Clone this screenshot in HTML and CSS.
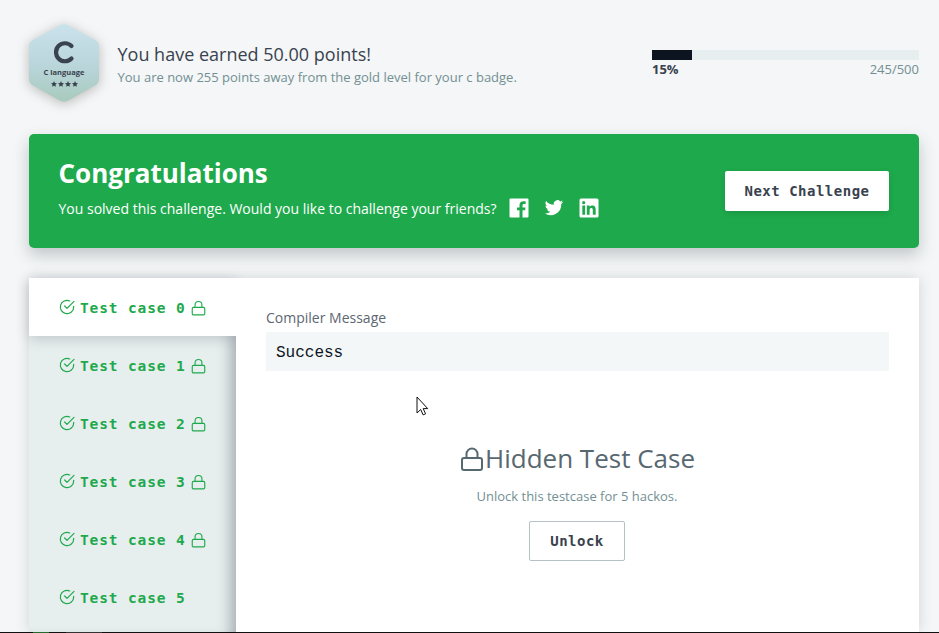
FILE: index.html
```html
<!DOCTYPE html>
<html lang="en">
<head>
<meta charset="utf-8">
<title>Challenge result</title>
<link rel="stylesheet" href="styles.css">
</head>
<body>
<svg class="defs" width="0" height="0" aria-hidden="true">
  <symbol id="check" viewBox="0 0 24 24"><path d="M22 11v1a10 10 0 1 1-5.9-9.1M22.5 3.5 12 14l-3.5-3.5"/></symbol>
  <symbol id="lock" viewBox="0 0 24 24"><rect x="2" y="11" width="20" height="12" rx="2"/><path d="M6.5 11V7a5.5 5.5 0 0 1 11 0v4"/></symbol>
  <symbol id="star" viewBox="0 0 10 10"><path d="m5 0 1.5 3.3 3.5.4-2.6 2.4.7 3.6L5 8 1.9 9.7l.7-3.6L0 3.7l3.5-.4z"/></symbol>
</svg>
<main class="page">
  <header class="score">
    <div class="badge">
      <svg class="badge-shape" viewBox="0 0 72 78"><defs><linearGradient id="badge-fill" x1="0" y1="0" x2="0" y2="1"><stop offset="0" stop-color="#cae2ec"/><stop offset=".55" stop-color="#b9d5da"/><stop offset="1" stop-color="#a8cabc"/></linearGradient></defs><path fill="url(#badge-fill)" d="M32 1.2Q36-.8 40 1.2L67 16Q71 18.500 71 22.500V55Q71 59 67 61.500L40 76.800Q36 78.800 32 76.800L5 61.500Q1 59 1 55V22.500Q1 18.500 5 16Z"/><path d="M43.500 22A9 9 0 1 0 43.500 34.500" fill="none" stroke="#39424e" stroke-width="4.200" stroke-linecap="round"/></svg>
      <span class="badge-name">C language</span>
      <span class="stars"><svg><use href="#star"/></svg><svg><use href="#star"/></svg><svg><use href="#star"/></svg><svg><use href="#star"/></svg></span>
    </div>
    <div class="earned"><h1>You have earned 50.00 points!</h1><p>You are now 255 points away from the gold level for your c badge.</p></div>
    <div class="progress"><div class="track"><div class="fill"></div></div><div class="progress-labels"><strong>15%</strong><span>245/500</span></div></div>
  </header>
  <section class="banner">
    <div><h2>Congratulations</h2>
      <div class="share"><span class="share-text">You solved this challenge. Would you like to challenge your friends?</span>
        <svg class="social" viewBox="0 0 20 20"><path fill-rule="evenodd" d="M1.500.500h17a1 1 0 0 1 1 1v17a1 1 0 0 1-1 1h-5V12.300h2.600l.4-2.900h-3V7.600c0-1 .3-1.600 1.500-1.600h1.600V3.300c-.6-.1-1.300-.1-2.200-.1-2.400 0-3.900 1.400-3.900 4v2.200H8v2.900h2.500v7.200h-9a1 1 0 0 1-1-1v-17a1 1 0 0 1 1-1z"/></svg>
        <svg class="social" viewBox="0 0 24 24"><path d="M23 4.800a9 9 0 0 1-2.600.7 4.500 4.500 0 0 0 2-2.500 9 9 0 0 1-2.900 1.100 4.500 4.500 0 0 0-7.700 4.100A12.800 12.800 0 0 1 2.500 3.500a4.500 4.500 0 0 0 1.400 6 4.500 4.500 0 0 1-2-.6 4.500 4.500 0 0 0 3.600 4.500 4.500 4.500 0 0 1-2 .1 4.500 4.500 0 0 0 4.200 3.100A9 9 0 0 1 1 18.500 12.800 12.800 0 0 0 20.700 7.100 9 9 0 0 0 23 4.800z"/></svg>
        <svg class="social" viewBox="0 0 20 20"><path fill-rule="evenodd" d="M2 .500h16A1.500 1.500 0 0 1 19.500 2v16a1.500 1.500 0 0 1-1.500 1.500H2A1.500 1.500 0 0 1 .500 18V2A1.500 1.500 0 0 1 2 .500zM3.300 7.600v9.100h2.800V7.600zM4.700 3.100a1.600 1.600 0 1 0 0 3.200 1.600 1.600 0 0 0 0-3.200zM7.800 7.600v9.100h2.800v-4.500c0-1.200.3-2.300 1.700-2.300s1.500 1.300 1.500 2.400v4.400h2.900v-5c0-2.400-.6-4.300-3.400-4.300-1.400 0-2.300.7-2.700 1.400V7.600z"/></svg>
      </div>
    </div>
    <button class="button next">Next Challenge</button>
  </section>
  <section class="results">
    <nav class="cases">
      <a class="case active"><svg class="check"><use href="#check"/></svg><span>Test case 0</span><svg class="lock"><use href="#lock"/></svg></a>
      <a class="case"><svg class="check"><use href="#check"/></svg><span>Test case 1</span><svg class="lock"><use href="#lock"/></svg></a>
      <a class="case"><svg class="check"><use href="#check"/></svg><span>Test case 2</span><svg class="lock"><use href="#lock"/></svg></a>
      <a class="case"><svg class="check"><use href="#check"/></svg><span>Test case 3</span><svg class="lock"><use href="#lock"/></svg></a>
      <a class="case"><svg class="check"><use href="#check"/></svg><span>Test case 4</span><svg class="lock"><use href="#lock"/></svg></a>
      <a class="case"><svg class="check"><use href="#check"/></svg><span>Test case 5</span></a>
    </nav>
    <div class="detail">
      <div class="label">Compiler Message</div>
      <pre class="message">Success</pre>
      <div class="hidden-case"><h3><svg class="lock big"><use href="#lock"/></svg>Hidden Test Case</h3><p>Unlock this testcase for 5 hackos.</p><button class="button unlock">Unlock</button></div>
    </div>
  </section>
  <footer class="edge"></footer>
</main>
<svg class="cursor" viewBox="0 0 13 20"><path d="M1 1v16l3.700-3.500 2.400 5.400 2.500-1.100-2.400-5.200h4.500z" fill="#fff" stroke="#111" stroke-linejoin="round"/></svg>
</body>
</html>
```
FILE: styles.css
```css
* { box-sizing: border-box; }
body { margin: 0; background: #f4f6f7; color: #39424e; font-family: "Open Sans", sans-serif; overflow: hidden; }
h1, h2, h3, p, pre { margin: 0; }
svg { display: block; flex: none; }
.defs, .cursor { position: absolute; }
.page { height: 633px; display: flex; flex-direction: column; overflow: hidden; }
.score { height: 134px; flex: none; display: flex; align-items: flex-start; padding: 24px 20px 0 28px; }
.badge { position: relative; width: 72px; height: 78px; display: flex; flex-direction: column; align-items: center; padding-top: 43px; }
.badge-shape { position: absolute; top: 0; left: 0; width: 72px; height: 78px; overflow: visible; filter: drop-shadow(0 2px 6px rgba(60, 50, 40, .3)); }
.badge-name { position: relative; font-size: 7.5px; line-height: 10px; font-weight: 700; white-space: nowrap; }
.stars { position: relative; display: flex; gap: 1px; margin-top: 4px; }
.stars svg { width: 6px; height: 6px; fill: #39424e; }
.earned { margin: 18px 0 0 17.500px; white-space: nowrap; }
.earned h1 { font-size: 18px; line-height: 25px; font-weight: 400; }
.earned p { font-size: 13px; line-height: 20px; color: #738f93; }
.progress { width: 267px; margin: 26px 0 0 auto; }
.track { height: 10px; background: #e7eeef; }
.fill { width: 15%; height: 10px; background: #0b141f; }
.progress-labels { display: flex; justify-content: space-between; font-size: 13px; line-height: 18px; }
.progress-labels span { color: #738f93; }
.banner { height: 114px; flex: none; margin: 0 20px 0 29px; padding: 0 30px 0 29.500px; display: flex; justify-content: space-between; align-items: center; background: #1ea94c; color: #fff; border-radius: 5px; box-shadow: 0 7px 16px rgba(57, 66, 78, .27); }
.banner h2 { font-size: 26px; line-height: 32px; padding-bottom: 2px; font-weight: 700; }
.share { display: flex; align-items: center; height: 34px; font-size: 14px; }
.share-text { margin-right: 12.500px; white-space: nowrap; }
.social { width: 20px; height: 20px; fill: #fff; margin-right: 15px; }
.button { height: 40px; padding: 0; border: 0; border-radius: 2px; background: #fff; color: #39424e; font: 700 14px/40px "DejaVu Sans Mono", monospace; letter-spacing: .5px; }
.next { width: 164px; box-shadow: 0 2px 6px rgba(0, 0, 0, .13); }
.results { flex: 1; min-height: 0; margin: 30px 20px 0 29px; display: flex; background: #fff; box-shadow: 0 0 13px rgba(57, 66, 78, .18); }
.cases { width: 207px; flex: none; background: #e6eeee; box-shadow: inset -14px 0 14px -9px rgba(57, 66, 78, .38); }
.case { height: 58px; display: flex; align-items: center; padding-left: 30px; color: #1ea94c; font: 700 14.5px/20px "DejaVu Sans Mono", monospace; letter-spacing: .87px; white-space: nowrap; }
.case.active { background: #fff; box-shadow: 0 3px 12px rgba(57, 66, 78, .22); }
.case span { width: 106px; margin: 2px 4.500px 0 5px; }
.check, .lock { width: 16px; height: 16px; fill: none; stroke: currentColor; stroke-width: 1.800; stroke-linecap: round; stroke-linejoin: round; overflow: visible; }
.case .lock { width: 15px; margin-top: 1px; }
.detail { flex: 1; position: relative; padding: 30px; background: #fff; }
.label { font-size: 14px; line-height: 20px; color: #5c6772; }
.message { height: 39px; margin-top: 4px; padding: 2px 10px 0; background: #f3f7f7; color: #0e141e; font: 16px/38px "Liberation Mono", monospace; }
.hidden-case { display: flex; flex-direction: column; align-items: center; padding: 67px 1px 0 0; }
.hidden-case h3 { display: flex; align-items: center; font-size: 26px; line-height: 40px; font-weight: 400; color: #576871; white-space: nowrap; }
.lock.big { width: 24px; height: 24px; margin: 2px 1px 0 1px; stroke-width: 2; }
.hidden-case p { margin-top: 8px; font-size: 13px; line-height: 20px; color: #738f93; }
.unlock { width: 96px; margin-top: 15px; border: 1px solid #b4c2c7; line-height: 38px; }
.edge { height: 1px; flex: none; position: relative; background: linear-gradient(90deg, #101010 33px, #246c2d 33px 49px, #101010 49px 66px, #333 66px 102px, #101010 102px); }
.cursor { left: 416px; top: 396px; width: 13px; height: 20px; }
```
